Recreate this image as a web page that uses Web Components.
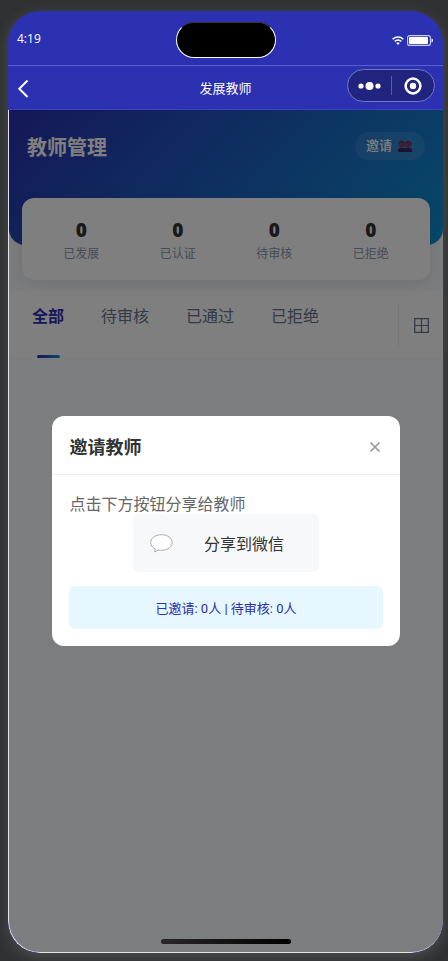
<!DOCTYPE html>
<html lang="zh-CN">
<head>
<meta charset="utf-8">
<meta name="viewport" content="width=device-width, initial-scale=1">
<title>发展教师</title>
<style>
html, body { height: 100%; margin: 0; }
body { background: #303132; font-family: "Open Sans", "Noto Sans CJK SC", sans-serif; }
</style>
</head>
<body>
<teacher-app></teacher-app>
<script>
const define = (name, html) => customElements.define(name, class extends HTMLElement {
  constructor() {
    super();
    const t = document.createElement('template');
    t.innerHTML = '<style>*,:host{box-sizing:border-box}button{font:inherit;color:inherit;border:0;padding:0;margin:0;background:none;cursor:pointer}svg{display:block}</style>' + html;
    this.attachShadow({ mode: 'open' }).append(t.content.cloneNode(true));
  }
});

define('phone-status', `
<style>
:host { display: grid; grid-template-columns: 1fr 100px 1fr; align-items: center; height: 54px; padding: 2px 9px 0; color: #fff; font-size: 12px; line-height: 16px; font-weight: 500; }
.island { height: 36px; border-radius: 18px; background: #000; border: 1px solid #fff; border-top-color: #333; margin-top: 2px; }
.right { display: flex; justify-content: flex-end; align-items: center; gap: 3px; padding-top: 2px; }
</style>
<span>4:19</span>
<div class="island"></div>
<div class="right">
  <svg width="12" height="9" viewBox="0 0 12 9" fill="none" stroke="#fff" stroke-width="1.5"><path d="M.6 3.2c3-3 7.800-3 10.800 0M2.700 5.400c1.900-1.800 4.700-1.800 6.600 0"/><path d="M4.200 7a2.600 2.600 0 0 1 3.600 0L6 8.900z" fill="#fff" stroke="none"/></svg>
  <svg width="27" height="11" viewBox="0 0 27 11" fill="none"><rect x=".6" y=".6" width="22.800" height="9.800" rx="2" stroke="#c9cbf0" stroke-width="1.100"/><rect x="2" y="2" width="19" height="7" rx="1" fill="#fff"/><path d="M24.500 3.500c2 .6 2 3.400 0 4z" fill="#fff"/></svg>
</div>`);

define('phone-nav', `
<style>
:host { display: grid; grid-template-columns: 1fr auto 1fr; align-items: center; height: 45px; padding: 0 8px 0 8px; border-top: 1px solid #5a5fd0; border-bottom: 1px solid #3c42c0; color: #fff; }
h1 { margin: 0; font-size: 13px; line-height: 20px; font-weight: 400; }
.back { width: 14px; height: 20px; }
.capsule { justify-self: end; display: flex; align-items: center; width: 88px; height: 33px; margin-top: -4px; border: 1px solid #7377c4; border-radius: 17px; background: #20247f; }
.capsule button { flex: 1; display: grid; place-items: center; }
.sep { width: 1px; height: 19px; background: #5a5da6; }
</style>
<button class="back" aria-label="返回"><svg width="14" height="20" viewBox="0 0 14 20" fill="none" stroke="#fff" stroke-width="2"><path d="M11.500 2.500 3.300 10.800 11.500 19"/></svg></button>
<h1>发展教师</h1>
<div class="capsule">
  <button aria-label="更多"><svg width="23" height="8" viewBox="0 0 23 8" fill="#fff"><circle cx="3" cy="4" r="2.600"/><circle cx="11.500" cy="4" r="4"/><circle cx="20" cy="4" r="2.600"/></svg></button>
  <span class="sep"></span>
  <button aria-label="关闭小程序"><svg width="18" height="18" viewBox="0 0 18 18"><circle cx="9" cy="9" r="7.400" fill="none" stroke="#fff" stroke-width="2.500"/><circle cx="9" cy="9" r="3.200" fill="#fff"/></svg></button>
</div>`);

define('page-hero', `
<style>
:host { display: block; height: 135px; padding: 22px 18px 0; border-radius: 0 0 16px 16px; background: linear-gradient(135deg, #2b2fb0, #0e92d4); }
.row { display: flex; justify-content: space-between; align-items: flex-start; color: #fff; }
h2 { margin: 0; font-size: 20px; line-height: 32px; font-weight: 700; }
button { display: flex; align-items: center; gap: 6px; height: 28px; padding: 0 13px 0 11px; border-radius: 14px; background: rgba(255,255,255,.1); font-size: 13px; line-height: 26px; font-weight: 500; }
button span { padding-bottom: 2px; }
</style>
<div class="row"><h2>教师管理</h2>
<button><span>邀请</span><svg width="14" height="12" viewBox="0 0 14 12"><path d="M0 12V10q0-2 3-2h8q3 0 3 2v2z" fill="#3e2460"/><circle cx="3.700" cy="4.600" r="3.300" fill="#7a3e68"/><circle cx="10.300" cy="4.600" r="3.300" fill="#7a3e68"/><path d="M.5 4.200C.3-.4 7-.6 6.800 4.200 5 2 2.500 2 .5 4.200M7.200 4.200C7-.4 13.700-.6 13.500 4.200 11.500 2 9 2 7.200 4.200" fill="#5c3864"/></svg></button></div>`);

define('stat-item', `
<style>
:host { display: flex; flex-direction: column; align-items: center; }
b { font-size: 19px; line-height: 24px; font-weight: 800; color: #333; }
span { font-size: 12px; line-height: 24px; color: #8a98ae; }
</style><b><slot></slot></b><span><slot name="label"></slot></span>`);

define('stat-card', `
<style>
:host { position: relative; display: grid; grid-template-columns: repeat(4, 1fr); align-items: center; height: 82px; margin: -47px 13px 0; padding: 5px 11px 0; border-radius: 12px; background: #fff; box-shadow: 0 4px 16px rgba(30,50,90,.12); }
::slotted(stat-item + stat-item) { background: linear-gradient(#eff0f3, #eff0f3) left 0 top 4px / 1px 34px no-repeat; }
</style><slot></slot>`);

define('filter-tabs', `
<style>
:host { display: flex; align-items: flex-start; height: 67px; margin-top: 11px; background: #fff; }
nav { flex: 1; display: flex; gap: 37px; padding-left: 23px; }
nav button { position: relative; height: 67px; padding-bottom: 18px; font-size: 16px; line-height: 24px; color: #64748b; }
nav button[aria-current] { color: #2b2fb0; font-weight: 600; }
nav button[aria-current]::after { content: ""; position: absolute; left: 50%; bottom: 0; width: 23px; height: 3px; margin-left: -11px; border-radius: 2px; background: linear-gradient(90deg, #2b2fb0, #0e8fd6); }
.grid { width: 45px; height: 44px; margin-top: 12px; border-left: 1px solid #f0f1f4; display: grid; place-items: center; }
</style>
<nav><button aria-current="true">全部</button><button>待审核</button><button>已通过</button><button>已拒绝</button></nav>
<button class="grid" aria-label="网格视图"><svg width="15" height="15" viewBox="0 0 15 15" fill="none" stroke="#64748b" stroke-width="1.200"><path d="M.7.7h13.600v13.600H.7zM7.500.7v13.600M.7 7.500h13.600"/></svg></button>`);

define('invite-dialog', `
<style>
:host { display: block; width: 80%; border-radius: 12px; background: #fff; color: #333; }
header { display: flex; align-items: center; justify-content: space-between; height: 59px; padding: 3px 19px 0 17px; border-bottom: 1px solid #f0f0f2; }
h3 { margin: 0; font-size: 18px; line-height: 26px; font-weight: 700; }
.body { padding: 18px 17px 17px; }
p { margin: 0; font-size: 16px; line-height: 22px; color: #666; }
.share { display: flex; align-items: center; width: 186px; height: 58px; margin: -1px auto 0; padding-left: 17px; gap: 31px; border-radius: 6px; background: #f7f8fa; font-size: 16px; }
output { display: block; margin-top: 14px; padding: 13px 0 10px; border-radius: 6px; background: #e6f7ff; color: #2b2fb0; font-family: Roboto, "Noto Sans CJK SC", sans-serif; font-size: 13px; line-height: 20px; text-align: center; }
</style>
<header><h3>邀请教师</h3><button aria-label="关闭"><svg width="12" height="12" viewBox="0 0 12 12" stroke="#999" stroke-width="1.700"><path d="m1.500 1.500 9 9m0-9-9 9"/></svg></button></header>
<div class="body"><p>点击下方按钮分享给教师</p>
<button class="share"><svg width="23" height="19" viewBox="0 0 23 19" fill="#fff" stroke="#aaa"><path d="M11.500.7C5.500.7.7 4.100.7 8.500c0 2.700 1.700 5 4.400 6.400L4.800 18l3.500-2c1 .2 2 .3 3.200.3 6 0 10.700-3.400 10.700-7.800S17.500.7 11.500.7z"/></svg><span>分享到微信</span></button>
<output>已邀请: 0人 | 待审核: 0人</output></div>`);

define('teacher-app', `
<style>
:host { display: flex; min-height: 100vh; padding: 11px 5px 8px 8px; background: #303132; }
.phone { flex: 1; display: flex; flex-direction: column; overflow: hidden; border-radius: 32px; background: #2b31b1; box-shadow: 0 4px 14px rgba(130,132,136,.35); }
.page { position: relative; flex: 1; background: #f8fafc; border: solid #e4e4e6; border-width: 0 0 1px 1px; border-radius: 0 0 32px 32px; overflow: hidden; }
.mask { position: absolute; inset: 0; display: grid; place-items: center; background: rgba(0,0,0,.5); }
.home { position: absolute; left: 50%; bottom: 8px; width: 130px; height: 5px; margin-left: -65px; border-radius: 3px; background: linear-gradient(90deg, #292729, #000); }
</style>
<div class="phone">
  <phone-status></phone-status>
  <phone-nav></phone-nav>
  <main class="page">
    <page-hero></page-hero>
    <stat-card>
      <stat-item>0<span slot="label">已发展</span></stat-item>
      <stat-item>0<span slot="label">已认证</span></stat-item>
      <stat-item>0<span slot="label">待审核</span></stat-item>
      <stat-item>0<span slot="label">已拒绝</span></stat-item>
    </stat-card>
    <filter-tabs></filter-tabs>
    <div class="mask"><invite-dialog role="dialog" aria-label="邀请教师"></invite-dialog></div>
    <div class="home"></div>
  </main>
</div>`);
</script>
</body>
</html>
